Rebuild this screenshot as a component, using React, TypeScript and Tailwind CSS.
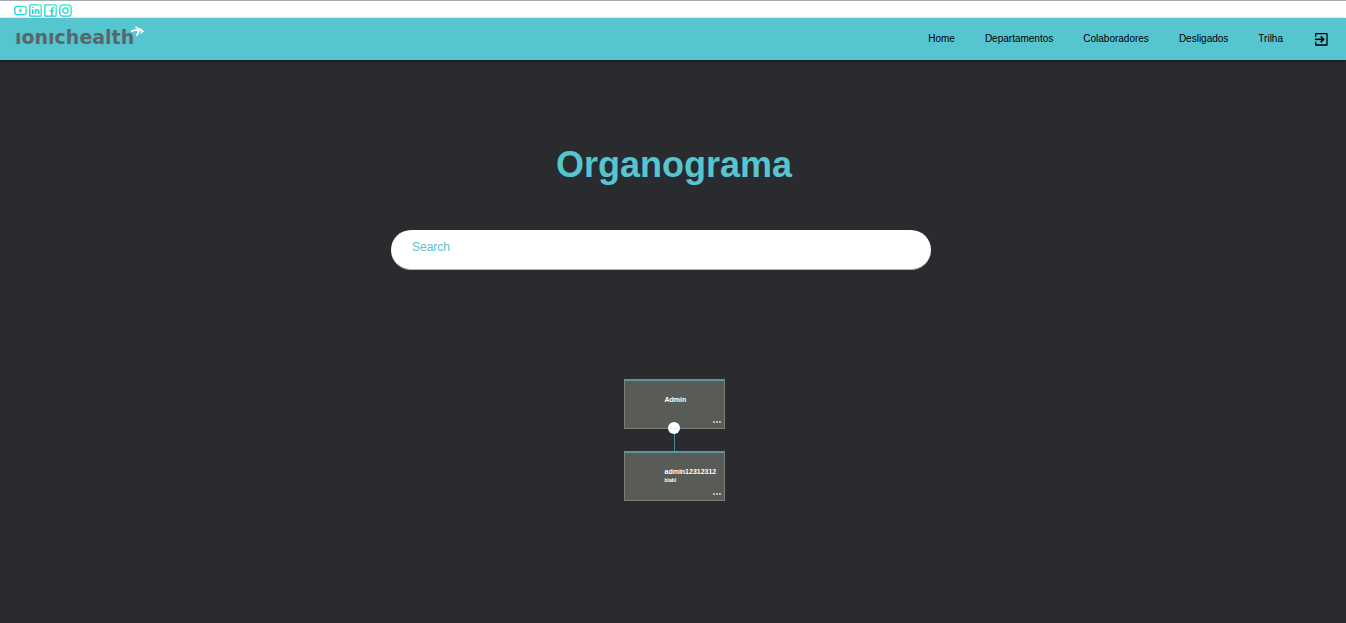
import type { ReactNode } from "react";

const links = ["Home", "Departamentos", "Colaboradores", "Desligados", "Trilha"];

function SocialIcon({ label, children }: { label: string; children: ReactNode }) {
  return (
    <a href="#" aria-label={label} className="block">
      <svg viewBox="0 0 24 24" className="size-[13px]" fill="none" stroke="url(#social)" strokeWidth="2.4">
        {children}
      </svg>
    </a>
  );
}

function SocialBar() {
  return (
    <div className="flex h-[18px] items-center gap-[2px] border-t border-[#aaaab2] bg-white pt-px pl-[14px]">
      <svg width="0" height="0" className="absolute" aria-hidden="true">
        <defs>
          <linearGradient id="social" gradientUnits="userSpaceOnUse" x1="2" y1="22" x2="22" y2="2">
            <stop offset="0" stopColor="#1cc4f5" />
            <stop offset="1" stopColor="#35f3ae" />
          </linearGradient>
        </defs>
      </svg>
      <SocialIcon label="YouTube">
        <rect x="1.5" y="4.5" width="21" height="15" rx="4" />
        <path d="M10 9v6l5-3z" fill="url(#social)" strokeWidth="1" />
      </SocialIcon>
      <SocialIcon label="LinkedIn">
        <rect x="1.5" y="1.5" width="21" height="21" rx="1.5" />
        <path d="M7 10v8.5M7 5.5v2M12 18.5V10M12 14c0-4.5 6-4.5 6 0v4.5" strokeWidth="3" />
      </SocialIcon>
      <SocialIcon label="Facebook">
        <rect x="1.5" y="1.5" width="21" height="21" rx="1.5" />
        <path d="M14.5 22V10.5c0-2.5 1-4 4.5-4M10.500 13h8" strokeWidth="3" />
      </SocialIcon>
      <SocialIcon label="Instagram">
        <rect x="1.500" y="1.500" width="21" height="21" rx="6" />
        <circle cx="12" cy="12" r="5" />
        <circle cx="18" cy="6" r="1" strokeWidth="1" />
      </SocialIcon>
    </div>
  );
}

function Logo() {
  return (
    <a href="#" aria-label="ionichealth" className="flex items-start pb-1">
      <span className="font-['DejaVu_Sans',sans-serif] text-[19px] leading-6 font-bold text-[#5a666b]">
        ıonıchealth
      </span>
      <svg viewBox="0 0 14 14" className="-ml-1 size-[14px]" fill="none" stroke="white" aria-hidden="true">
        <path d="M1 6.500C4 5 8 4.500 13 6.200" strokeWidth="1.600" />
        <path d="M5.500 1.800c3.500 1 4 6 .8 8.700" strokeWidth="1.900" />
        <path d="M9.500 3.200l3.600 3-2.600 2.200" strokeWidth="1.200" />
      </svg>
    </a>
  );
}

function Header() {
  return (
    <header className="flex h-[42px] items-center justify-between bg-[#55c5d0] pr-[17px] pl-[15px] shadow-[0_1px_3px_rgba(0,0,0,0.5)]">
      <Logo />
      <nav className="flex items-center gap-[30px] text-[10px] leading-4 text-black">
        {links.map((link) => (
          <a key={link} href="#">
            {link}
          </a>
        ))}
        <button type="button" aria-label="Sair">
          <svg viewBox="0 0 24 24" className="size-4" fill="none" stroke="currentColor">
            <path d="M4 9V4h17v17H4v-5" strokeWidth="1.900" strokeLinejoin="round" />
            <path d="M3 12.500h12" strokeWidth="2.400" />
            <path d="M11.500 8l4.500 4.500-4.500 4.500" strokeWidth="2.400" />
          </svg>
        </button>
      </nav>
    </header>
  );
}

function PersonCard({ name, role }: { name: string; role?: string }) {
  return (
    <article className="flex h-[50px] w-[101px] flex-col border border-t-2 border-[#7c7e7b] border-t-[#55989f] bg-[#595b57] pt-[14px] pl-10 font-bold text-white">
      <h2 className="text-[7px] leading-[10px]">{name}</h2>
      <p className="h-2 text-[5px] leading-[7px]">{role}</p>
      <button type="button" aria-label={`Opções de ${name}`} className="mt-auto mr-[3px] mb-[5px] flex gap-px self-end">
        <span className="size-[2px] bg-[#b9bab8]" />
        <span className="size-[2px] bg-[#b9bab8]" />
        <span className="size-[2px] bg-[#b9bab8]" />
      </button>
    </article>
  );
}

function Chart() {
  return (
    <section aria-label="Hierarquia" className="flex flex-col items-center">
      <div className="relative">
        <PersonCard name="Admin" />
        <button
          type="button"
          aria-label="Recolher"
          className="absolute -bottom-[5px] left-1/2 flex size-3 -translate-x-1/2 items-center justify-center rounded-full bg-white"
        >
          <span className="h-px w-2 bg-[#d5eef1]" />
        </button>
      </div>
      <div className="h-[22px] w-px bg-[#418c94]" />
      <PersonCard name="admin12312312" role="blabl" />
    </section>
  );
}

export default function App() {
  return (
    <div className="flex min-h-screen flex-col bg-[#2a2b2e] font-['Liberation_Sans',Arial,sans-serif]">
      <SocialBar />
      <Header />
      <main className="flex flex-col items-center pt-[81px] pr-4 pb-10 pl-[18px]">
        <h1 className="text-4xl leading-[48px] font-bold text-[#55c5d0]">Organograma</h1>
        <div className="flex w-full justify-center pt-[41px] pr-[26px]">
          <input
            type="text"
            aria-label="Search"
            placeholder="Search"
            className="h-10 w-full max-w-[540px] rounded-full border-b border-[#b5b5b5] bg-white px-[21px] pb-[6px] text-xs text-[#2a2b2e] outline-none placeholder:text-[#55c5d0]"
          />
        </div>
        <div className="pt-[109px]">
          <Chart />
        </div>
      </main>
    </div>
  );
}
